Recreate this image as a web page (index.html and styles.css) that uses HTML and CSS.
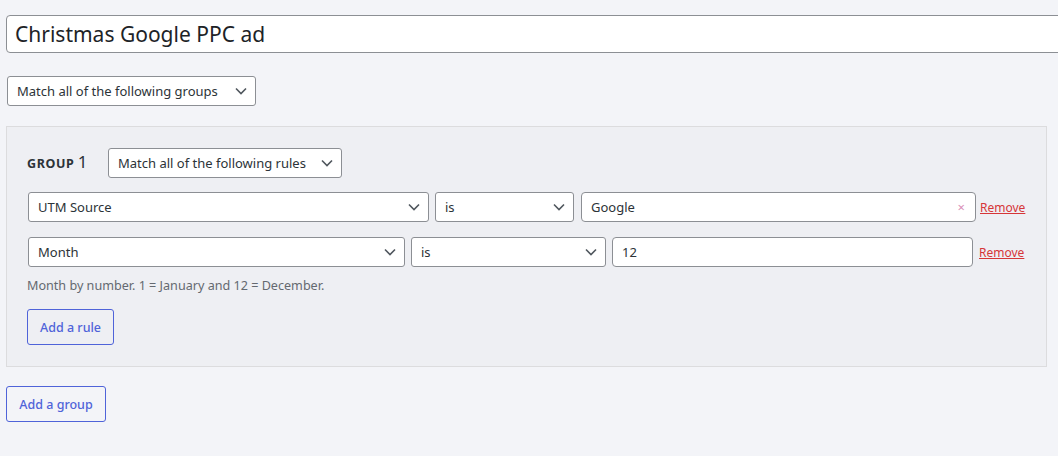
FILE: index.html
```html
<!DOCTYPE html>
<html>
<head>
<meta charset="utf-8">
<link rel="stylesheet" href="styles.css">
</head>
<body>
<div class="page">
  <div class="title-input">Christmas Google PPC ad</div>

  <div class="select match-groups">
    <span>Match all of the following groups</span>
    <svg class="chev" width="12" height="8" viewBox="0 0 12 8"><path d="M1 1.5l5 5 5-5" fill="none" stroke="#50575e" stroke-width="1.6"/></svg>
  </div>

  <div class="group">
    <div class="group-head">
      <div class="group-label"><span class="gword">GROUP</span> <span class="gnum">1</span></div>
      <div class="select match-rules">
        <span>Match all of the following rules</span>
        <svg class="chev" width="12" height="8" viewBox="0 0 12 8"><path d="M1 1.5l5 5 5-5" fill="none" stroke="#50575e" stroke-width="1.6"/></svg>
      </div>
    </div>

    <div class="rule rule-1">
      <div class="select field">
        <span>UTM Source</span>
        <svg class="chev" width="12" height="8" viewBox="0 0 12 8"><path d="M1 1.5l5 5 5-5" fill="none" stroke="#50575e" stroke-width="1.6"/></svg>
      </div>
      <div class="select op">
        <span>is</span>
        <svg class="chev" width="12" height="8" viewBox="0 0 12 8"><path d="M1 1.5l5 5 5-5" fill="none" stroke="#50575e" stroke-width="1.6"/></svg>
      </div>
      <div class="input value">
        <span>Google</span>
        <span class="clear">×</span>
      </div>
      <a class="remove" href="#">Remove</a>
    </div>

    <div class="rule rule-2">
      <div class="select field">
        <span>Month</span>
        <svg class="chev" width="12" height="8" viewBox="0 0 12 8"><path d="M1 1.5l5 5 5-5" fill="none" stroke="#50575e" stroke-width="1.6"/></svg>
      </div>
      <div class="select op">
        <span>is</span>
        <svg class="chev" width="12" height="8" viewBox="0 0 12 8"><path d="M1 1.5l5 5 5-5" fill="none" stroke="#50575e" stroke-width="1.6"/></svg>
      </div>
      <div class="input value">
        <span>12</span>
      </div>
      <a class="remove" href="#">Remove</a>
    </div>

    <p class="help">Month by number. 1 = January and 12 = December.</p>

    <button class="btn add-rule">Add a rule</button>
  </div>

  <button class="btn add-group">Add a group</button>
</div>
</body>
</html>
```

FILE: styles.css
```css
html, body {
  margin: 0;
  padding: 0;
  background: #f3f4f8;
  overflow: hidden;
}

body {
  font-family: "Noto Sans", "Open Sans", sans-serif;
  color: #1d2327;
  font-size: 13px;
}

.page {
  padding: 15px 0 0 6px;
  width: 1100px;
}

.title-input {
  box-sizing: border-box;
  width: 1070px;
  height: 38px;
  border: 1px solid #8c8f94;
  border-radius: 4px;
  background: #fff;
  font-size: 21px;
  line-height: 36px;
  padding-left: 8px;
  color: #1d2327;
}

.select {
  box-sizing: border-box;
  height: 30px;
  border: 1px solid #8c8f94;
  border-radius: 3px;
  background: #fff;
  display: flex;
  align-items: center;
  justify-content: space-between;
  padding: 0 8px 0 9px;
  font-size: 13px;
  color: #2c3338;
}

.chev {
  flex: none;
}

.match-groups {
  margin-top: 23px;
  margin-left: 1px;
  width: 249px;
}

.group {
  box-sizing: border-box;
  width: 1041px;
  margin-top: 20px;
  border: 1px solid #dcdcde;
  background: #eeeff3;
  padding: 21px 20px 21px 20px;
}

.group-head {
  display: flex;
  align-items: center;
  height: 30px;
}

.group-label {
  width: 81px;
  color: #1d2327;
  line-height: 20px;
}

.gword {
  font-weight: 700;
  font-size: 12.5px;
  letter-spacing: 0.6px;
  color: #2c3338;
}

.gnum {
  font-size: 17px;
  color: #2c3338;
}

.match-rules {
  width: 234px;
}

.rule {
  display: flex;
  align-items: center;
}

.rule-1 { margin-top: 14px; }
.rule-2 { margin-top: 15px; }

.input {
  box-sizing: border-box;
  height: 30px;
  border: 1px solid #8c8f94;
  border-radius: 4px;
  background: #fff;
  display: flex;
  align-items: center;
  justify-content: space-between;
  padding: 0 10px 0 9px;
  font-size: 13px;
  color: #2c3338;
}

.rule-1 .field { width: 401px; margin-left: 1px; }
.rule-1 .op { width: 139px; margin-left: 6px; }
.rule-1 .value { width: 395px; margin-left: 7px; }
.rule-1 .remove { margin-left: 4px; }

.rule-2 .field { width: 377px; margin-left: 1px; }
.rule-2 .op { width: 195px; margin-left: 6px; }
.rule-2 .value { width: 361px; margin-left: 6px; }
.rule-2 .remove { margin-left: 6px; }

.clear {
  color: #d98fb8;
  font-size: 13px;
}

.remove {
  color: #d63638;
  font-size: 12px;
  text-decoration: underline;
}

.help {
  margin: 12px 0 0 0;
  font-size: 12.6px;
  color: #646970;
  line-height: 14px;
}

.btn {
  box-sizing: border-box;
  height: 36px;
  border: 1px solid #4f63d9;
  border-radius: 3px;
  background: transparent;
  color: #4f63d9;
  font-family: inherit;
  font-size: 12.5px;
  font-weight: 500;
  padding: 0 12px;
  cursor: pointer;
}

.add-rule {
  margin-top: 16px;
  width: 87px;
  margin-left: 0;
}

.add-group {
  margin-top: 19px;
  width: 100px;
  display: block;
}
```
